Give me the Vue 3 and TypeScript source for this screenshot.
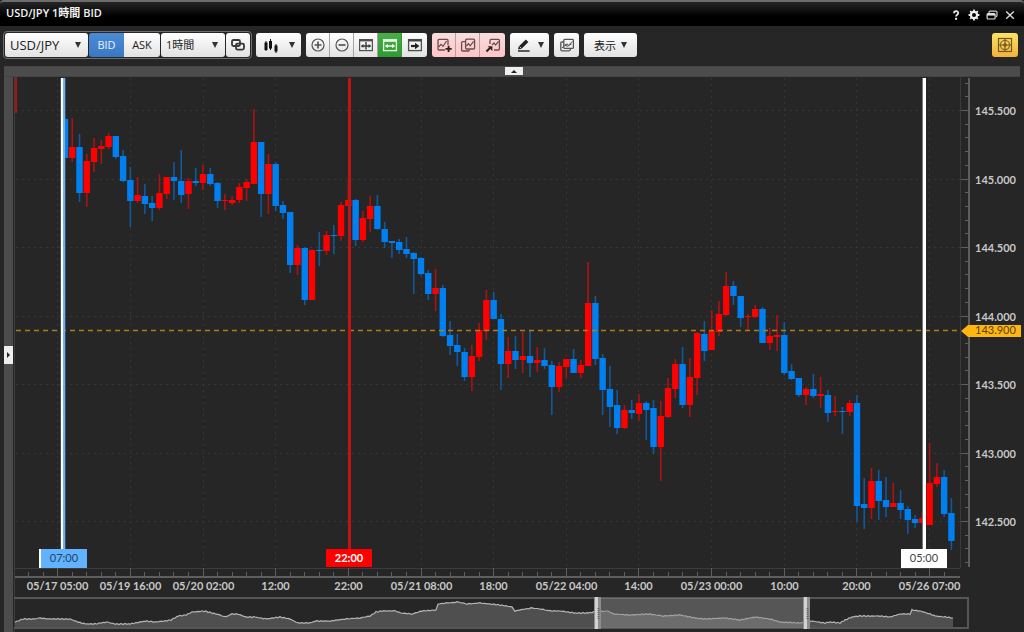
<script setup lang="ts">
import { ref } from 'vue'

type Direction = 'u' | 'd'
type Bar = [Direction, number, number, number, number]

const pair = ref('USD/JPY')
const span = ref('1時間')
const side = ref<'BID' | 'ASK'>('BID')

/* direction, high, body top, body bottom, low */
const bars: Bar[] = [
  ['d', 118, 119, 158, 158], ['u', 118, 147, 158, 162], ['d', 134, 147, 193, 202], ['u', 154, 161, 193, 207],
  ['u', 138, 148, 162, 172], ['u', 140, 146, 149, 164], ['u', 133, 136, 147, 149], ['d', 136, 136, 157, 159],
  ['d', 150, 156, 181, 182], ['d', 167, 180, 201, 227], ['u', 177, 195, 201, 203], ['d', 184, 196, 204, 214],
  ['d', 196, 203, 208, 221], ['u', 174, 193, 208, 210], ['u', 177, 177, 194, 199], ['d', 162, 177, 181, 200],
  ['d', 150, 181, 195, 203], ['u', 178, 181, 194, 209], ['d', 168, 181, 183, 186], ['u', 165, 174, 183, 190],
  ['d', 168, 174, 184, 186], ['d', 182, 183, 201, 208], ['u', 194, 200, 201, 210], ['u', 196, 200, 203, 205],
  ['u', 183, 187, 200, 203], ['u', 179, 182, 188, 201], ['u', 109, 142, 184, 184], ['d', 142, 142, 194, 217],
  ['u', 154, 164, 194, 214], ['d', 162, 164, 206, 211], ['d', 201, 205, 213, 219], ['d', 212, 212, 265, 273],
  ['u', 245, 248, 265, 275], ['d', 247, 248, 300, 305], ['u', 249, 250, 300, 300], ['d', 232, 250, 251, 266],
  ['u', 231, 235, 251, 255], ['d', 225, 235, 236, 254], ['u', 202, 205, 236, 241], ['u', 181, 200, 206, 206],
  ['d', 199, 200, 240, 246], ['u', 211, 218, 240, 242], ['u', 196, 206, 219, 232], ['d', 195, 206, 229, 230],
  ['d', 222, 229, 242, 248], ['d', 241, 241, 243, 258], ['d', 239, 242, 250, 254], ['d', 237, 249, 254, 258],
  ['d', 252, 253, 259, 294], ['d', 257, 258, 274, 276], ['d', 270, 273, 294, 300], ['u', 269, 288, 294, 311],
  ['d', 285, 288, 336, 337], ['d', 321, 335, 346, 355], ['d', 334, 345, 352, 366], ['d', 348, 352, 377, 381],
  ['u', 345, 356, 377, 391], ['u', 323, 330, 357, 361], ['u', 290, 300, 331, 340], ['d', 292, 300, 319, 319],
  ['d', 314, 319, 364, 390], ['u', 337, 351, 364, 378], ['d', 336, 351, 360, 369], ['u', 332, 356, 360, 373],
  ['d', 331, 356, 363, 377], ['u', 347, 360, 363, 372], ['d', 348, 360, 366, 369], ['d', 361, 365, 387, 415],
  ['u', 362, 366, 387, 392], ['u', 359, 359, 367, 378], ['d', 349, 359, 373, 373], ['u', 360, 365, 373, 378],
  ['u', 262, 303, 366, 366], ['d', 296, 303, 359, 365], ['d', 354, 358, 390, 415], ['d', 366, 389, 407, 427],
  ['d', 390, 405, 428, 434], ['u', 405, 410, 428, 429], ['d', 400, 410, 413, 419], ['u', 394, 403, 414, 421],
  ['d', 401, 403, 410, 440], ['d', 400, 408, 447, 454], ['u', 401, 416, 447, 481], ['u', 378, 388, 417, 418],
  ['u', 359, 364, 389, 398], ['d', 347, 364, 405, 408], ['u', 358, 377, 405, 417], ['u', 332, 333, 378, 395],
  ['d', 321, 334, 351, 361], ['u', 310, 331, 350, 350], ['u', 301, 314, 332, 336], ['u', 272, 286, 315, 316],
  ['d', 281, 286, 296, 305], ['d', 296, 296, 318, 327], ['u', 314, 316, 317, 331], ['u', 305, 309, 317, 318],
  ['d', 307, 309, 343, 343], ['u', 328, 336, 343, 350], ['u', 315, 335, 337, 351], ['d', 322, 335, 373, 375],
  ['d', 364, 371, 379, 380], ['d', 378, 378, 395, 397], ['u', 387, 389, 395, 405], ['d', 374, 389, 396, 398],
  ['u', 377, 394, 396, 408], ['d', 390, 395, 413, 422], ['u', 396, 411, 412, 416], ['d', 407, 411, 412, 434],
  ['u', 400, 403, 412, 416], ['d', 395, 403, 506, 522], ['d', 478, 504, 508, 529], ['u', 468, 481, 508, 519],
  ['d', 470, 481, 501, 520], ['d', 477, 500, 507, 517], ['u', 483, 503, 507, 507], ['d', 490, 503, 510, 519],
  ['d', 506, 509, 520, 534], ['d', 515, 519, 523, 528], ['u', 512, 518, 523, 523], ['u', 443, 483, 525, 525],
  ['u', 463, 477, 484, 487], ['d', 470, 477, 514, 517], ['d', 498, 513, 541, 550],
]

const originX = 57.7
const step = 7.266
const barX = (i: number): number => originX + step * i

const candles = bars.map(([dir, high, top, bottom, low], i) => ({
  dir, high, low, top,
  x: barX(i + 1),
  height: Math.max(1, bottom - top),
}))

const timeLabels = ['05/17 05:00', '05/19 16:00', '05/20 02:00', '12:00', '22:00', '05/21 08:00', '18:00',
  '05/22 04:00', '14:00', '05/23 00:00', '10:00', '20:00', '05/26 07:00']
const times = timeLabels.map((label, i) => ({ label, x: Math.floor(barX(i * 10)) + 0.5 }))
const timeTicks = Array.from({ length: 64 }, (_, i) => Math.floor(barX(i * 2 - 4)) + 0.5).filter((x) => x > 20 && x < 962)

const prices = Array.from({ length: 7 }, (_, i) => ({
  label: (145.5 - i * 0.5).toFixed(3),
  y: Math.round(111 + i * 68.5) - 0.5,
}))
const priceTicks = Array.from({ length: 36 }, (_, i) => Math.round(111 + (i - 2) * 13.7) - 0.5)

const overview: [number, number][] = [
  [15, 622], [23, 619], [33, 619], [40, 618], [50, 619], [70, 619], [78, 622], [85, 624], [95, 624], [107, 622],
  [115, 624], [130, 624], [145, 621], [155, 622], [165, 621], [171, 620], [178, 616], [186, 615], [192, 612],
  [204, 611], [212, 613], [220, 615], [225, 617], [232, 614], [238, 614], [246, 617], [255, 617], [266, 619],
  [280, 617], [290, 619], [298, 623], [310, 623], [315, 621], [330, 621], [345, 619], [360, 618], [370, 616],
  [376, 612], [382, 611], [395, 611], [401, 613], [412, 614], [422, 611], [436, 610], [438, 604], [447, 603],
  [458, 602], [467, 604], [480, 603], [490, 604], [500, 605], [512, 607], [515, 611], [525, 609], [532, 608],
  [541, 609], [550, 611], [560, 611], [575, 613], [588, 613], [594, 612], [608, 611], [613, 614], [630, 615],
  [650, 614], [663, 616], [680, 615], [695, 618], [705, 619], [725, 618], [740, 620], [755, 617], [770, 619],
  [780, 622], [800, 623], [811, 621], [825, 623], [830, 622], [840, 623], [845, 620], [852, 617], [860, 616],
  [880, 616], [890, 617], [900, 614], [910, 614], [912, 610], [920, 611], [930, 614], [935, 616], [945, 617], [953, 618],
]
const detailed: string[] = []
overview.slice(1).forEach(([x2, y2], i) => {
  const [x1, y1] = overview[i]
  for (let x = x1; x < x2; x += 2) {
    const y = y1 + ((y2 - y1) * (x - x1)) / (x2 - x1)
    detailed.push(`${x},${(y + Math.sin(x * 1.7) * 0.5).toFixed(1)}`)
  }
})
detailed.push('953,618')
const overviewLine = detailed.join(' ')
const overviewArea = `15,628 ${overviewLine} 953,628`
</script>

<template>
  <div class="window">
    <header class="titlebar">
      <h1>USD/JPY 1時間 BID</h1>
      <div class="window-buttons">
        <button type="button" aria-label="ヘルプ">
          <svg viewBox="0 0 12 12"><path d="M4 4.2C4 1.6 8.2 1.6 8.2 4C8.2 5.6 6.1 5.6 6.1 7.6" fill="none" stroke="#eee" stroke-width="1.8" /><rect x="5.1" y="8.8" width="2" height="2" fill="#eee" /></svg>
        </button>
        <button type="button" aria-label="設定">
          <svg viewBox="0 0 12 12"><circle cx="6" cy="6" r="3.1" fill="none" stroke="#eee" stroke-width="2.2" /><path d="M6 .6V2.4M6 9.6V11.4M.6 6H2.4M9.6 6H11.4M2.2 2.2L3.4 3.4M8.6 8.6L9.8 9.8M9.8 2.2L8.6 3.4M3.4 8.6L2.2 9.8" stroke="#eee" stroke-width="1.8" /></svg>
        </button>
        <button type="button" aria-label="元に戻す">
          <svg viewBox="0 0 12 12"><path d="M3 4V3.4Q3 2.2 4.2 2.2H9.6Q11 2.2 11 3.6V6.4Q11 7.6 10 7.6" fill="none" stroke="#ccc" stroke-width="1.2" /><rect x="1.1" y="4.6" width="8" height="5.4" rx="1" fill="none" stroke="#ddd" stroke-width="1.2" /><path d="M1 5.6H9" stroke="#ddd" stroke-width="2" /></svg>
        </button>
        <button type="button" aria-label="閉じる">
          <svg viewBox="0 0 12 12"><path d="M2.2 2.6L9.8 9.8M9.8 2.6L2.2 9.8" stroke="#ddd" stroke-width="1.4" /></svg>
        </button>
      </div>
    </header>

    <div class="toolbar">
      <div class="linked">
        <div class="picker pair">
          <select v-model="pair" aria-label="通貨ペア"><option>USD/JPY</option></select>
          <i class="arrow"></i>
        </div>
        <div class="joined">
          <button type="button" class="tab bid" :class="{ on: side === 'BID' }" @click="side = 'BID'">BID</button>
          <button type="button" class="tab ask" :class="{ on: side === 'ASK' }" @click="side = 'ASK'">ASK</button>
        </div>
        <div class="picker span">
          <select v-model="span" aria-label="足種"><option>1時間</option></select>
          <i class="arrow"></i>
        </div>
        <button type="button" class="tool" aria-label="リンク">
          <svg viewBox="0 0 16 16"><g fill="none" stroke="#383838" stroke-width="1.8"><rect x="2" y="3" width="8" height="6" rx="1.5" /><rect x="6" y="6.6" width="8" height="6" rx="1.5" /></g></svg>
        </button>
      </div>

      <button type="button" class="tool menu" aria-label="チャート種類">
        <svg viewBox="0 0 16 16"><path d="M3 4V14M7.5 2V13M13 7V16" stroke="#111" stroke-width="1" /><path d="M3 5.5V13M7.5 4V11.5M13 8.5V14.5" stroke="#111" stroke-width="3" /></svg>
        <i class="arrow"></i>
      </button>

      <div class="joined cells">
        <button type="button" class="tool" aria-label="拡大">
          <svg viewBox="0 0 16 16"><circle cx="8" cy="8" r="6" fill="none" stroke="#555" stroke-width="1.2" /><path d="M8 4.5V11.5M4.5 8H11.5" stroke="#555" stroke-width="1.7" /></svg>
        </button>
        <button type="button" class="tool" aria-label="縮小">
          <svg viewBox="0 0 16 16"><circle cx="8" cy="8" r="6" fill="none" stroke="#555" stroke-width="1.2" /><path d="M4.5 8H11.5" stroke="#555" stroke-width="1.7" /></svg>
        </button>
        <button type="button" class="tool" aria-label="全体表示">
          <svg viewBox="0 0 16 16"><rect x="1.6" y="2.6" width="12.8" height="11" fill="none" stroke="#505050" stroke-width="1.2" /><path d="M1.5 3.4H14.5" stroke="#505050" stroke-width="2" /><path d="M8 5V12.6M3.5 9H12.5" stroke="#383838" stroke-width="1.4" /><path d="M3 9L5.4 7V11ZM13 9L10.6 7V11Z" fill="#383838" /></svg>
        </button>
        <button type="button" class="tool green" aria-label="幅を固定">
          <svg viewBox="0 0 16 16"><rect x="1.6" y="2.6" width="12.8" height="11" fill="none" stroke="#e8ffe8" stroke-width="1.3" /><path d="M1.5 3.6H14.5" stroke="#e8ffe8" stroke-width="2.4" /><path d="M4 9H12" stroke="#fff" stroke-width="1.4" /><path d="M2.8 9L5.8 6.8V11.2ZM13.2 9L10.2 6.8V11.2Z" fill="#fff" /></svg>
        </button>
        <button type="button" class="tool" aria-label="最新へ">
          <svg viewBox="0 0 16 16"><rect x="1.6" y="2.6" width="12.8" height="11" fill="none" stroke="#505050" stroke-width="1.3" /><path d="M1.5 3.4H14.5" stroke="#444" stroke-width="2.2" /><path d="M4 9H9" stroke="#222" stroke-width="2.2" /><path d="M8 5.8L12.4 9L8 12.2Z" fill="#222" /></svg>
        </button>
      </div>

      <div class="joined cells pink">
        <button type="button" class="tool" aria-label="指標を追加">
          <svg viewBox="0 0 16 16"><path d="M9 13H3Q2 13 2 12V3.4Q2 2.4 3 2.4H11Q12 2.4 12 3.4V8" fill="none" stroke="#6b4b4b" stroke-width="1.3" /><path d="M2.6 10L5 7.4L7 9.4L10.6 4" fill="none" stroke="#6b4b4b" stroke-width="1.2" /><path d="M12.6 8.8V15M9.5 11.9H15.7" stroke="#2c2020" stroke-width="1.9" /></svg>
        </button>
        <button type="button" class="tool" aria-label="指標を複製">
          <svg viewBox="0 0 16 16"><path d="M5.6 4.6H2.6Q1.6 4.6 1.6 5.6V13Q1.6 14 2.6 14H8.4Q9.4 14 9.4 12.4" fill="none" stroke="#6b4b4b" stroke-width="1.3" /><rect x="5.6" y="2.2" width="9" height="9.8" rx="1" fill="none" stroke="#6b4b4b" stroke-width="1.3" /><path d="M6.4 9L8.4 6.6L10.2 8.8L13.6 4.4" fill="none" stroke="#6b4b4b" stroke-width="1.2" /></svg>
        </button>
        <button type="button" class="tool" aria-label="指標を読込">
          <svg viewBox="0 0 16 16"><path d="M5 7V3.4Q5 2.4 6 2.4H13.4Q14.4 2.4 14.4 3.4V12Q14.4 13 13.4 13H9" fill="none" stroke="#6b4b4b" stroke-width="1.3" /><path d="M7 8L9 6L10.6 8L13.6 4.4" fill="none" stroke="#6b4b4b" stroke-width="1.2" /><path d="M1.4 14.4L5 11" stroke="#2c2020" stroke-width="2" /><path d="M2.6 9.2H7.4V14Z" fill="#2c2020" /></svg>
        </button>
      </div>

      <button type="button" class="tool menu pen" aria-label="描画">
        <svg viewBox="0 0 16 16"><path d="M2 12.6L3 9.2L9.8 2.4L12.4 5L5.6 11.8Z" fill="#222" /><path d="M3.6 9.6L5.4 11.4" stroke="#eee" stroke-width=".8" /><path d="M2 14H13.6" stroke="#333" stroke-width="1.6" /></svg>
        <i class="arrow"></i>
      </button>
      <button type="button" class="tool single" aria-label="チャート一覧">
        <svg viewBox="0 0 16 16"><path d="M4.6 5H2.8Q1.8 5 1.8 6V12.6Q1.8 13.8 3 13.8H10Q11.4 13.8 11.4 12" fill="none" stroke="#555" stroke-width="1.3" /><rect x="4.8" y="2.4" width="9.6" height="9" rx="1" fill="none" stroke="#555" stroke-width="1.3" /><path d="M3 11L6.4 7.4L8.2 9.6L13.4 4.4M6 9L8 6.8L9.6 8.8L12.6 6.8" fill="none" stroke="#555" stroke-width="1" /></svg>
      </button>
      <button type="button" class="tool menu show">表示<i class="arrow"></i></button>

      <button type="button" class="tool gold" aria-label="注文パネル">
        <svg viewBox="0 0 16 16"><rect x="1.5" y="1.5" width="13" height="13" fill="none" stroke="#725a20" stroke-width="1.2" /><circle cx="8" cy="8" r="4.6" fill="none" stroke="#8a6d28" stroke-width="1.3" /><path d="M8 1.5V14.5M1.5 8H14.5" stroke="#725a20" stroke-width="1.2" /><circle cx="8" cy="8" r="1.8" fill="#725a20" /></svg>
      </button>
    </div>

    <div class="top-strip"><button type="button" aria-label="上部を開く"><i></i></button></div>

    <main class="content">
      <aside class="side-strip"><button type="button" aria-label="左側を開く"><i></i></button></aside>
      <svg class="chart" viewBox="14 77 1010 555" role="img" aria-label="USD/JPY 1時間足チャート">
        <g class="grid">
          <line v-for="p in prices" :key="p.label" x1="16" x2="960" :y1="p.y" :y2="p.y" />
          <line v-for="t in times" :key="t.x" :x1="t.x" :x2="t.x" y1="78" y2="568" />
        </g>

        <g class="faint">
          <path d="M960.5 78V568M15 568.5H960M14.5 77V632" />
        </g>

        <rect class="u-wick" x="15" y="77" width="2" height="36" />
        <g v-for="(c, i) in candles" :key="i" :class="c.dir">
          <rect class="wick" :x="c.x - 0.8" :y="c.high" width="1.6" :height="c.low - c.high" />
          <rect class="body" :x="c.x - 3.2" :y="c.top" width="6.4" :height="c.height" />
        </g>

        <line class="current" x1="16" x2="961" y1="330.5" y2="330.5" />

        <g class="axis">
          <path d="M969 78V567M15 577H960" stroke-width="2" />
          <line v-for="p in prices" :key="p.label" x1="961" x2="968" :y1="p.y" :y2="p.y" />
          <line v-for="y in priceTicks" :key="y" x1="965" x2="968" :y1="y" :y2="y" />
          <line v-for="t in times" :key="t.x" :x1="t.x" :x2="t.x" y1="568" y2="576" />
          <line v-for="x in timeTicks" :key="x" :x1="x" :x2="x" y1="572" y2="576" />
        </g>
        <g class="labels">
          <text v-for="p in prices" :key="p.label" x="975" :y="p.y + 4">{{ p.label }}</text>
          <text v-for="t in times" :key="t.x" class="mid" :x="t.x" y="590">{{ t.label }}</text>
        </g>

        <polygon points="961,331 968,325 1021,325 1021,337 968,337" fill="#ffb610" />
        <text class="now" x="975" y="334">143.900</text>

        <g class="markers">
          <rect x="60" y="78" width="6" height="471" fill="#777" opacity=".45" />
          <rect x="61" y="78" width="2" height="471" fill="#fff" />
          <rect x="63" y="78" width="2" height="471" fill="#61b3ff" />
          <rect x="39" y="549" width="48" height="19" fill="#61b3ff" />
          <rect x="39" y="549" width="2" height="19" fill="#fff" />
          <text x="64" y="562" fill="#24415f">07:00</text>
          <rect x="348" y="78" width="3" height="471" fill="#c01414" />
          <rect x="326" y="549" width="46" height="18" fill="#f00" />
          <text x="349" y="562" fill="#fff" class="strong">22:00</text>
          <rect x="922" y="78" width="4" height="471" fill="#777" />
          <rect x="923" y="78" width="3" height="471" fill="#fff" />
          <rect x="901" y="549" width="46" height="19" fill="#fff" />
          <text x="924" y="562" fill="#444">05:00</text>
        </g>

        <g class="overview">
          <polygon :points="overviewArea" fill="#4f4f4f" />
          <polyline :points="overviewLine" fill="none" stroke="#b4b4b4" stroke-width="1.2" />
          <path d="M14 598H968V628H14" fill="none" stroke="#565656" stroke-width="2" />
          <rect x="600" y="598" width="204" height="30" fill="#8c8c8c" opacity=".48" />
          <g v-for="x in [594, 803]" :key="x">
            <rect :x="x" y="597" width="7" height="32" fill="#8d8d8d" />
            <rect :x="x + 1" y="597" width="3" height="32" fill="#d2d2d2" />
            <path :d="`M${x + 4.5} 608V619`" stroke="#666" stroke-width="2" stroke-dasharray="1 1" />
          </g>
        </g>
      </svg>
    </main>
  </div>
</template>

<style>
html {
  background: #262626;
}
body {
  margin: 0;
  overflow: hidden;
}
</style>

<style scoped>
.window {
  display: flex;
  flex-direction: column;
  background: #262626;
  font-family: "Open Sans", "Noto Sans CJK JP", sans-serif;
  font-size: 11px;
}
button,
select {
  font: inherit;
  color: #222;
  border: 0;
  margin: 0;
  padding: 0;
  cursor: pointer;
}
.titlebar {
  display: flex;
  align-items: center;
  justify-content: space-between;
  box-sizing: border-box;
  height: 26px;
  padding: 0 8px 0 6px;
  border-top: 2px solid #6c6c6c;
  border-radius: 4px 4px 0 0;
  background: linear-gradient(#252525, #000 60%);
}
.titlebar h1 {
  margin: 0;
  padding-bottom: 2px;
  font-size: 11px;
  line-height: 20px;
  font-weight: 600;
  color: #f2f2f2;
}
.window-buttons {
  display: flex;
  gap: 6px;
  padding-top: 2px;
}
.window-buttons button {
  width: 12px;
  height: 12px;
  background: none;
}
.window-buttons svg {
  display: block;
}
.toolbar {
  display: flex;
  align-items: center;
  gap: 5px;
  height: 37px;
  padding: 0 6px 2px 3px;
}
.linked {
  display: flex;
  gap: 1px;
  padding: 1px;
  border: 1px solid #6e6e6e;
  border-radius: 4px;
  margin-right: -1px;
}
.picker,
.tab,
.tool {
  height: 24px;
  box-sizing: border-box;
  border-radius: 3px;
  background: linear-gradient(#fff, #e2e2e2);
}
.picker {
  display: flex;
  align-items: center;
  position: relative;
}
.picker select {
  appearance: none;
  width: 100%;
  height: 100%;
  background: none;
  padding-left: 5px;
}
.pair {
  width: 83px;
}
.pair select {
  font-size: 13px;
}
.span {
  width: 64px;
}
.arrow {
  border: 3px solid transparent;
  border-top: 6px solid #333;
  border-bottom: 0;
}
.picker .arrow {
  position: absolute;
  right: 7px;
  pointer-events: none;
}
.joined {
  display: flex;
}
.tab {
  width: 36px;
  padding-bottom: 1px;
}
.tab.bid {
  width: 35px;
  border-radius: 3px 0 0 3px;
}
.tab.ask {
  border-radius: 0 3px 3px 0;
}
.tab.on {
  color: #e8f2ff;
  background: linear-gradient(#4b8bd6, #3a78c4);
}
.tool {
  display: flex;
  align-items: center;
  justify-content: center;
  width: 24px;
  flex: none;
}
.tool svg {
  width: 16px;
  height: 16px;
}
.menu {
  width: 45px;
  gap: 10px;
}
.pen {
  width: 39px;
  gap: 6px;
}
.show {
  width: 53px;
  gap: 5px;
}
.single {
  width: 25px;
}
.cells .tool {
  border-radius: 0;
  border-right: 1px solid #a5a5a5;
}
.cells .tool:first-child {
  border-radius: 3px 0 0 3px;
}
.cells .tool:last-child {
  width: 25px;
  border-right: 0;
  border-radius: 0 3px 3px 0;
}
.cells .green {
  background: linear-gradient(#46b046, #2f9a2f);
  border-color: #2f9a2f;
}
.pink .tool {
  background: linear-gradient(#f7dede, #ffc4c6);
  border-color: #c09a9a;
}
.gold {
  width: 26px;
  margin-left: auto;
  background: linear-gradient(#fbe366, #f3b13c);
}
.top-strip {
  display: flex;
  justify-content: center;
  height: 9px;
  margin: 1px 4px 0;
  padding-left: 4px;
  border-top: 1px solid #444;
  border-bottom: 1px solid #444;
  background: #4c4c4c;
}
.top-strip button,
.side-strip button {
  display: flex;
  align-items: center;
  justify-content: center;
  background: #eee;
}
.top-strip button {
  width: 18px;
  height: 8px;
}
.top-strip i {
  border: 3px solid transparent;
  border-top: 0;
  border-bottom: 3px solid #222;
}
.content {
  display: flex;
}
.side-strip {
  display: flex;
  align-items: center;
  flex: 0 0 9px;
  margin: 0 1px 0 4px;
  background: #4c4c4c;
}
.side-strip button {
  width: 9px;
  height: 18px;
}
.side-strip i {
  border: 3px solid transparent;
  border-right: 0;
  border-left: 3px solid #222;
}
.chart {
  display: block;
  flex: 1;
  min-width: 0;
  height: auto;
}
.grid line {
  stroke: #363636;
  stroke-dasharray: 2 4;
}
.faint path {
  fill: none;
  stroke: #3c3c3c;
}
.u .body {
  fill: #f00;
}
.u .wick,
.u-wick {
  fill: #ad1212;
}
.d .body {
  fill: #0080f0;
}
.d .wick {
  fill: #11589c;
}
.current {
  stroke: #ac7f16;
  stroke-width: 1.5;
  stroke-dasharray: 5 4;
}
.axis {
  stroke: #5e5e5e;
  fill: none;
}
text {
  font-family: Lato, sans-serif;
  font-size: 11px;
}
.labels text {
  fill: #c8c8c8;
  font-weight: 700;
}
.labels .mid,
.markers text {
  text-anchor: middle;
}
.now {
  fill: #584414;
}
.markers .strong {
  font-weight: 700;
}
</style>
